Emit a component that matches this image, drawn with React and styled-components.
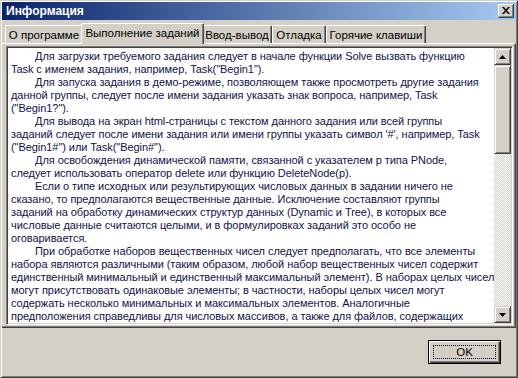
import React from "react";
import styled, { createGlobalStyle } from "styled-components";

const GlobalStyle = createGlobalStyle`
  html, body {
    margin: 0;
    padding: 0;
    background: #d4d0c8;
  }
  body {
    font-family: "Liberation Sans", Arial, sans-serif;
    font-size: 11px;
  }
`;

const paragraphs = [
  [
    "Для загрузки требуемого задания следует в начале функции Solve вызвать функцию",
    'Task с именем задания, например, Task("Begin1").',
  ],
  [
    "Для запуска задания в демо-режиме, позволяющем также просмотреть другие задания",
    "данной группы, следует после имени задания указать знак вопроса, например, Task",
    '("Begin1?").',
  ],
  [
    "Для вывода на экран html-страницы с текстом данного задания или всей группы",
    "заданий следует после имени задания или имени группы указать символ '#', например, Task",
    '("Begin1#") или Task("Begin#").',
  ],
  [
    "Для освобождения динамической памяти, связанной с указателем p типа PNode,",
    "следует использовать оператор delete или функцию DeleteNode(p).",
  ],
  [
    "Если о типе исходных или результирующих числовых данных в задании ничего не",
    "сказано, то предполагаются вещественные данные. Исключение составляют группы",
    "заданий на обработку динамических структур данных (Dynamic и Tree), в которых все",
    "числовые данные считаются целыми, и в формулировках заданий это особо не",
    "оговаривается.",
  ],
  [
    "При обработке наборов вещественных чисел следует предполагать, что все элементы",
    "набора являются различными (таким образом, любой набор вещественных чисел содержит",
    "единственный минимальный и единственный максимальный элемент). В наборах целых чисел",
    "могут присутствовать одинаковые элементы; в частности, наборы целых чисел могут",
    "содержать несколько минимальных и максимальных элементов. Аналогичные",
    "предположения справедливы для числовых массивов, а также для файлов, содержащих",
  ],
];

const tabs = [
  { label: "О программе", width: 78 },
  { label: "Выполнение заданий", width: 123 },
  { label: "Ввод-вывод", width: 70 },
  { label: "Отладка", width: 54 },
  { label: "Горячие клавиши", width: 100 },
];

const App = () => {
  return (
    <>
      <GlobalStyle />
      <Window>
        <TitleBar>
          <Title>Информация</Title>
          <CloseButton>
            <svg width="8" height="7" viewBox="0 0 8 7">
              <path d="M0 0h2l2 2.5L6 0h2L5 3.5 8 7H6L4 4.5 2 7H0l3-3.5z" fill="#000" />
            </svg>
          </CloseButton>
        </TitleBar>
        <TabStrip>
          {tabs.map((t, i) => (
            <Tab key={t.label} $active={i === 1} style={{ width: t.width }}>
              {t.label}
            </Tab>
          ))}
        </TabStrip>
        <Panel>
          <TextBox>
            <Content>
              {paragraphs.map((lines, pi) =>
                lines.map((line, li) => (
                  <Line key={pi + "-" + li} $indent={li === 0}>
                    {line}
                  </Line>
                ))
              )}
            </Content>
            <ScrollBar>
              <ArrowButton>
                <svg width="7" height="4" viewBox="0 0 7 4">
                  <polygon points="3.5,0 7,4 0,4" fill="#000" />
                </svg>
              </ArrowButton>
              <Thumb />
              <Track />
              <ArrowButton>
                <svg width="7" height="4" viewBox="0 0 7 4">
                  <polygon points="0,0 7,0 3.5,4" fill="#000" />
                </svg>
              </ArrowButton>
            </ScrollBar>
          </TextBox>
        </Panel>
        <Footer>
          <OkButton>
            <FocusRect>OK</FocusRect>
          </OkButton>
        </Footer>
      </Window>
    </>
  );
};

export default App;

const Window = styled.div`
  width: 518px;
  height: 378px;
  box-sizing: border-box;
  background: #d4d0c8;
  border: 1px solid;
  border-color: #d4d0c8 #404040 #404040 #d4d0c8;
  box-shadow: inset 1px 1px #fff, inset -1px -1px #808080;
  padding: 1px;
  display: flex;
  flex-direction: column;
`;

const TitleBar = styled.div`
  height: 18px;
  flex: none;
  display: flex;
  align-items: center;
  justify-content: space-between;
  padding: 0 2px 0 4px;
  background: linear-gradient(to right, #0a246a, #a6caf0);
`;

const Title = styled.div`
  color: #fff;
  font-weight: bold;
  font-size: 12px;
  font-family: "Liberation Sans", Arial, sans-serif;
`;

const CloseButton = styled.div`
  width: 16px;
  height: 14px;
  box-sizing: border-box;
  background: #d4d0c8;
  display: flex;
  align-items: center;
  justify-content: center;
  box-shadow: inset -1px -1px #404040, inset 1px 1px #fff,
    inset -2px -2px #808080;
  padding-bottom: 1px;
`;

const TabStrip = styled.div`
  display: flex;
  align-items: flex-end;
  height: 21px;
  margin-top: 2px;
  padding-left: 3px;
  flex: none;
`;

const Tab = styled.div`
  box-sizing: border-box;
  height: ${(p) => (p.$active ? "21px" : "18px")};
  margin: ${(p) => (p.$active ? "0 -2px -1px -2px" : "0")};
  position: relative;
  z-index: ${(p) => (p.$active ? 1 : 0)};
  background: #d4d0c8;
  border-left: 1px solid #fff;
  border-top: 1px solid #fff;
  border-right: 1px solid #404040;
  border-radius: 2px 2px 0 0;
  box-shadow: inset -1px 0 #808080;
  display: flex;
  align-items: center;
  justify-content: center;
  color: #000;
  font-size: 11.5px;
  white-space: nowrap;
  padding-bottom: ${(p) => (p.$active ? "2px" : "0")};
`;

const Panel = styled.div`
  flex: none;
  height: 285px;
  box-sizing: border-box;
  border-top: 1px solid #fff;
  border-right: 1px solid #404040;
  border-bottom: 1px solid #404040;
  box-shadow: inset -1px -1px #808080;
  padding: 2px 2px 2px 4px;
  display: flex;
`;

const TextBox = styled.div`
  flex: 1;
  display: flex;
  box-sizing: border-box;
  border: 1px solid;
  border-color: #808080 #fff #fff #808080;
  box-shadow: inset 1px 1px #404040, inset -1px -1px #d4d0c8;
  padding: 1px;
  background: #fff;
  min-width: 0;
`;

const Content = styled.div`
  flex: 1;
  overflow: hidden;
  padding: 2px 3px 0 3px;
  color: #12124a;
  font-size: 11px;
  line-height: 13px;
  letter-spacing: -0.06px;
`;

const Line = styled.div`
  white-space: nowrap;
  height: 13px;
  padding-left: ${(p) => (p.$indent ? "24px" : "0")};
`;

const ScrollBar = styled.div`
  width: 17px;
  flex: none;
  display: flex;
  flex-direction: column;
`;

const raised = `
  background: #d4d0c8;
  box-sizing: border-box;
  border: 1px solid;
  border-color: #d4d0c8 #404040 #404040 #d4d0c8;
  box-shadow: inset 1px 1px #fff, inset -1px -1px #808080;
`;

const ArrowButton = styled.div`
  ${raised}
  height: 17px;
  flex: none;
  display: flex;
  align-items: center;
  justify-content: center;
`;

const Thumb = styled.div`
  ${raised}
  height: 89px;
  flex: none;
`;

const Track = styled.div`
  flex: 1;
  background-color: #fff;
  background-image: conic-gradient(
    #d4d0c8 25%,
    transparent 0 50%,
    #d4d0c8 0 75%,
    transparent 0
  );
  background-size: 2px 2px;
`;

const Footer = styled.div`
  flex: 1;
  display: flex;
  justify-content: flex-end;
  align-items: flex-start;
  padding: 12px 15px 0 0;
`;

const OkButton = styled.div`
  width: 73px;
  height: 24px;
  box-sizing: border-box;
  border: 1px solid #000;
  background: #d4d0c8;
  box-shadow: inset 1px 1px #fff, inset -1px -1px #404040,
    inset -2px -2px #808080;
  padding: 4px;
  display: flex;
`;

const FocusRect = styled.div`
  flex: 1;
  border: 1px dotted #000;
  display: flex;
  align-items: center;
  justify-content: center;
  font-size: 11.5px;
  color: #000;
`;
